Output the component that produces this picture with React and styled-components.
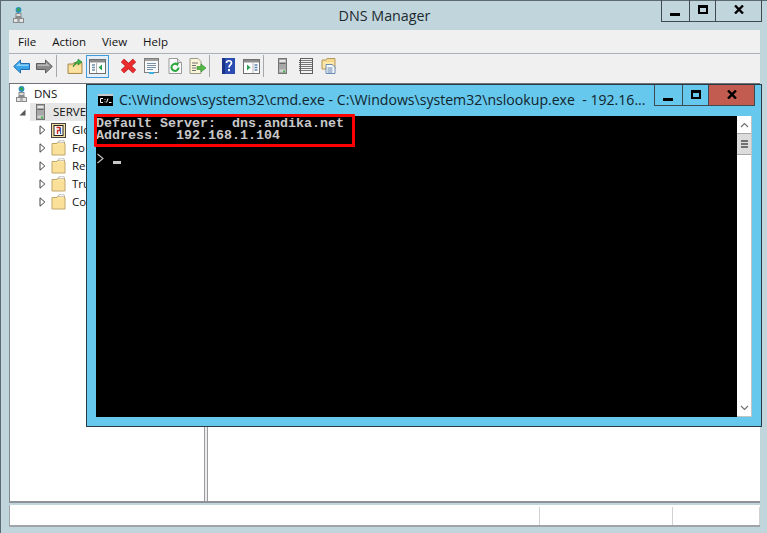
import React from 'react';
import styled, { createGlobalStyle } from 'styled-components';

const uiFont = `"Open Sans", "Noto Sans", "Liberation Sans", sans-serif`;

const GlobalStyle = createGlobalStyle`
  html, body {
    margin: 0;
    padding: 0;
    overflow: hidden;
  }
  * {
    box-sizing: border-box;
  }
`;

const Desktop = styled.div`
  position: relative;
  width: 767px;
  height: 533px;
  overflow: hidden;
  font-family: ${uiFont};
`;

const MainWindow = styled.div`
  display: flex;
  flex-direction: column;
  width: 100%;
  height: 100%;
  padding: 0 7px 6px 8px;
  background: #c1d5dc;
  border-top: 1px solid #5c6a72;
  border-left: 1px solid #5c6a72;
`;

const TitleBar = styled.div`
  position: relative;
  display: flex;
  align-items: center;
  justify-content: center;
  flex: none;
  height: 29px;
  font-size: 14.3px;
  color: #1c2a30;
`;

const AppIcon = styled.span`
  position: absolute;
  left: 4px;
  top: 6px;
  display: flex;
`;

const Controls = styled.div`
  position: absolute;
  top: ${p => p.$top}px;
  right: ${p => p.$right}px;
  display: flex;
  height: ${p => p.$height}px;
  border: 1px solid #3f4a50;
  border-top: none;
`;

const ControlButton = styled.div`
  display: flex;
  align-items: flex-start;
  justify-content: center;
  width: ${p => p.$width}px;
  padding-top: 5px;
  background: ${p => p.$bg || 'transparent'};
  & + & {
    border-left: 1px solid #3f4a50;
  }
`;

const Client = styled.div`
  display: flex;
  flex: 1;
  flex-direction: column;
  min-height: 0;
`;

const MenuBar = styled.div`
  display: flex;
  align-items: center;
  flex: none;
  gap: 16px;
  height: 24px;
  padding-left: 9px;
  background: #f0f0f0;
  border-bottom: 1px solid #a9b0b8;
  font-size: 11.5px;
  color: #111;
`;

const Toolbar = styled.div`
  display: flex;
  align-items: center;
  flex: none;
  height: 30px;
  padding: 0 0 5px 1px;
  background: #f0f0f0;
  border-bottom: 1px solid #6d7378;
`;

const ToolSlot = styled.span`
  display: flex;
  align-items: center;
  justify-content: center;
  flex: none;
  width: 23px;
  height: 23px;
  margin-right: ${p => (p.$active ? 8 : 0)}px;
  background: ${p => (p.$active ? '#e4eef8' : 'transparent')};
  border: ${p => (p.$active ? '1px solid #3e9ad8' : 'none')};
`;

const ToolSeparator = styled.span`
  flex: none;
  width: 1px;
  height: 22px;
  margin-right: ${p => p.$right}px;
  background: #a4a8ac;
`;

const Panes = styled.div`
  display: flex;
  flex: 1;
  min-height: 0;
  background: #fff;
  border-bottom: 2px solid #8e9298;
`;

const TreePane = styled.div`
  width: 195px;
  flex: none;
  padding-top: 1px;
  background: #fff;
  border-left: 1px solid #83888e;
  font-size: 11.5px;
  color: #111;
`;

const Splitter = styled.div`
  flex: none;
  width: 4px;
  background: #ececec;
  border-left: 1px solid #9a9ca0;
  border-right: 1px solid #9a9ca0;
`;

const DetailPane = styled.div`
  flex: 1;
  background: #fff;
`;

const TreeRow = styled.div`
  display: flex;
  align-items: center;
  height: 18px;
  padding-left: ${p => p.$indent}px;
  white-space: nowrap;
`;

const Expander = styled.span`
  display: flex;
  flex: none;
  justify-content: center;
  width: 9px;
  margin-right: ${p => p.$gap}px;
`;

const ServerHighlight = styled.span`
  display: flex;
  align-items: center;
  gap: 8px;
  width: 175px;
  height: 18px;
  padding-left: 6px;
  background: #e6e6e6;
`;

const RowLabel = styled.span`
  margin-left: ${p => p.$gap}px;
  padding-bottom: 2px;
`;

const StatusBar = styled.div`
  display: flex;
  flex: none;
  height: 22px;
  margin-top: 2px;
  background: #fff;
  border-left: 1px solid #a0a4a8;
  border-bottom: 2px solid #a0a4a8;
`;

const StatusCell = styled.div`
  flex: ${p => (p.$grow ? 1 : 'none')};
  width: ${p => p.$width || 'auto'};
  margin: 2px 0 0;
  border-right: 1px solid #d0d2d4;
`;

const CmdWindow = styled.div`
  position: absolute;
  left: 86px;
  top: 84px;
  display: flex;
  flex-direction: column;
  width: 676px;
  height: 343px;
  padding: 0 9px 9px 9px;
  background: #65c8ec;
  border: 1px solid #2b3a42;
`;

const CmdTitle = styled.div`
  display: flex;
  align-items: center;
  flex: none;
  gap: 6px;
  height: 31px;
  padding: 0 0 2px 2px;
  font-size: 14.1px;
  color: #13242c;
  white-space: pre;
`;

const CmdBody = styled.div`
  position: relative;
  display: flex;
  flex: 1;
  min-height: 0;
`;

const Console = styled.pre`
  flex: 1;
  margin: 0;
  padding: 2px 0 0 0;
  background: #000;
  color: #c8c8c8;
  font-family: "Liberation Mono", "DejaVu Sans Mono", monospace;
  font-size: 13.33px;
  font-weight: 700;
  line-height: 12px;
`;

const Prompt = styled.div`
  display: flex;
  align-items: flex-end;
  gap: 9px;
  margin-top: 11px;
  padding-left: 1px;
`;

const Cursor = styled.span`
  width: 8px;
  height: 3px;
  background: #c8c8c8;
`;

const Highlight = styled.div`
  position: absolute;
  left: -2px;
  top: -2px;
  width: 261px;
  height: 33px;
  border: 3px solid #f00;
  border-radius: 1px;
`;

const Scrollbar = styled.div`
  display: flex;
  flex: none;
  flex-direction: column;
  width: 15px;
  background: #fff;
  border-right: 1px solid #c4c4c4;
  border-bottom: 1px solid #c4c4c4;
`;

const ScrollArrow = styled.div`
  display: flex;
  align-items: center;
  justify-content: center;
  flex: none;
  height: 17px;
  background: #fff;
`;

const ScrollThumb = styled.div`
  display: flex;
  flex: none;
  flex-direction: column;
  align-items: center;
  justify-content: center;
  gap: 1px;
  height: 22px;
  background: #dcdcdc;
  border-top: 1px solid #a8a8a8;
  border-bottom: 1px solid #a8a8a8;
`;

const ThumbLine = styled.span`
  width: 7px;
  height: 2px;
  background: #707070;
`;

const ScrollTrack = styled.div`
  flex: 1;
`;

const Minimize = () => (
  <svg width="11" height="12" viewBox="0 0 11 12">
    <rect x="0" y="8" width="10" height="3" fill="#000" />
  </svg>
);

const Maximize = () => (
  <svg width="10" height="9" viewBox="0 0 10 9">
    <path d="M0 0h10v9H0z M2 3v4h6V3z" fill="#000" fillRule="evenodd" />
  </svg>
);

const Close = () => (
  <svg width="10" height="9" viewBox="0 0 10 9">
    <path d="M1 0.5l8 8M9 0.5l-8 8" stroke="#000" strokeWidth="2.4" fill="none" />
  </svg>
);

const DnsIcon = () => (
  <svg width="11" height="16" viewBox="0 0 11 16">
    <path d="M5.5 5v7M2.5 12v-1.5h6V12" stroke="#8a8a8a" fill="none" />
    <rect x="3" y="6.5" width="5" height="3" fill="#dcdcdc" stroke="#8a8a8a" />
    <rect x="0.5" y="11.5" width="4.5" height="4" fill="#e4e4e4" stroke="#8a8a8a" />
    <rect x="6" y="11.5" width="4.5" height="4" fill="#e4e4e4" stroke="#8a8a8a" />
    <circle cx="5.5" cy="3" r="2.9" fill="#2a8fc4" />
    <path d="M3.5 2.5l2-1.8 1.7 1.6-1 2.2-1.6-.5z" fill="#3aa84a" />
  </svg>
);

const ServerIcon = () => (
  <svg width="9" height="16" viewBox="0 0 9 16">
    <rect x="0.5" y="0.5" width="8" height="15" fill="#a8a8a8" stroke="#747474" />
    <rect x="1.5" y="2" width="6" height="2" fill="#e6e6e6" />
    <rect x="1.5" y="5" width="6" height="1" fill="#666" />
    <rect x="1.5" y="11.5" width="6" height="2.5" fill="#d2d2d2" />
    <rect x="5" y="12.5" width="2" height="2" fill="#42b84a" />
  </svg>
);

const Folder = () => (
  <svg width="15" height="16" viewBox="0 0 15 16">
    <path d="M1 3.5h5l1-1.5h6.5v2H14v11H1z" fill="#fde6a0" stroke="#bfa468" />
    <rect x="8" y="0.5" width="5" height="2" fill="#f4f4f4" stroke="#b9b9b9" strokeWidth="0.6" />
    <path d="M2 5h11v9H2z" fill="#fbe09a" />
  </svg>
);

const ZoneIcon = () => (
  <svg width="15" height="16" viewBox="0 0 15 16">
    <rect x="0.5" y="1.5" width="14" height="14" fill="#f5dd9c" stroke="#444" />
    <rect x="3" y="3.5" width="9" height="10" fill="#fff" stroke="#222" />
    <path d="M5.5 5.5h3.5v3H6.5v3.5" stroke="#c8281e" strokeWidth="1.4" fill="none" />
    <path d="M9.5 6v6" stroke="#2a62b8" strokeWidth="1.2" />
  </svg>
);

const Back = () => (
  <svg width="17" height="15" viewBox="0 0 17 15">
    <path d="M0.7 7.5L7.5 1v3.5h9v6h-9V14z" fill="#38a4ea" stroke="#1f6db0" />
    <path d="M3 7L7 3.5V5.5h8.5V7z" fill="#8fd2f8" />
  </svg>
);

const Forward = () => (
  <svg width="17" height="15" viewBox="0 0 17 15">
    <path d="M16.3 7.5L9.5 1v3.5h-9v6h9V14z" fill="#8a8a8a" stroke="#5c5c5c" />
    <path d="M14 7L10 3.5V5.5H1.5V7z" fill="#b8b8b8" />
  </svg>
);

const UpFolder = () => (
  <svg width="16" height="16" viewBox="0 0 16 16">
    <path d="M1 6h5l1-1.5h8v11H1z" fill="#f3d488" stroke="#a98c50" />
    <path d="M2 8h12v6.5H2z" fill="#fbe2a0" />
    <path d="M6 9c1-3 2-5 5-6V1l4 3-4 3V5c-2 .5-3 2-5 4z" fill="#3fb04a" stroke="#1f7c2c" strokeWidth="0.6" />
  </svg>
);

const Pane = ({ side }) => (
  <svg width="17" height="15" viewBox="0 0 17 15">
    <rect x="0.5" y="0.5" width="16" height="14" fill="#fff" stroke="#6f6f6f" />
    <rect x="1" y="1" width="15" height="2.5" fill="#8d8d8d" />
    {side === 'left' ? (
      <>
        <path d="M3 6h3M3 8.5h3M3 11h3" stroke="#6f8fa8" strokeWidth="1.3" />
        <path d="M7.5 4v10" stroke="#b4b4b4" />
        <path d="M13 5.5v6L9.5 8.5z" fill="#2aa052" />
      </>
    ) : (
      <>
        <path d="M4 5.5v6l3.5-3z" fill="#2aa052" />
        <path d="M10 4v10" stroke="#b4b4b4" />
        <path d="M11.5 6h3M11.5 8.5h3M11.5 11h3" stroke="#5c84b0" strokeWidth="1.3" />
      </>
    )}
  </svg>
);

const Delete = () => (
  <svg width="17" height="16" viewBox="0 0 17 16">
    <path d="M2.5 2.5l12 11M14.5 2.5l-12 11" stroke="#b01c20" strokeWidth="4.6" fill="none" />
    <path d="M2.5 2.5l12 11M14.5 2.5l-12 11" stroke="#ee2c2e" strokeWidth="3.4" fill="none" />
  </svg>
);

const Properties = () => (
  <svg width="15" height="16" viewBox="0 0 15 16">
    <rect x="0.5" y="0.5" width="14" height="14" fill="#f8f8f8" stroke="#7e7e7e" />
    <rect x="1" y="1" width="13" height="2" fill="#a0a0a0" />
    <path d="M3 5.5h9M3 7.5h9M3 9.5h9M3 11.5h6" stroke="#7890a8" />
    <rect x="5" y="14" width="5" height="2" fill="#3ab0e0" />
  </svg>
);

const Refresh = () => (
  <svg width="14" height="16" viewBox="0 0 14 16">
    <path d="M1 .5h8.5l4 4v11H1z" fill="#fafafa" stroke="#9a9a9a" />
    <path d="M9.5 .5v4h4" fill="#e4e4e4" stroke="#9a9a9a" />
    <path d="M10.5 9.5a3.5 3.5 0 1 1-1.5-3" fill="none" stroke="#2ca83c" strokeWidth="2" />
    <path d="M7 4.5l4 .5-1.5 3.5z" fill="#2ca83c" />
  </svg>
);

const ExportList = () => (
  <svg width="17" height="16" viewBox="0 0 17 16">
    <path d="M1 .5h8l3 3v12H1z" fill="#fbf5d8" stroke="#9a9a8a" />
    <path d="M3 5h6M3 7.5h4M3 10h4M3 12.5h4" stroke="#6e6e6e" />
    <path d="M8 8.5h4V6l5 4-5 4v-2.5H8z" fill="#55b845" stroke="#2c8a2c" strokeWidth="0.6" />
  </svg>
);

const Help = () => (
  <svg width="13" height="16" viewBox="0 0 13 16">
    <rect width="13" height="16" fill="#2a4cb0" />
    <rect x="0" y="0" width="3" height="16" fill="#1c3488" />
    <path d="M4.5 5c0-3 5-3 5 0 0 2-2.5 2-2.5 4.5" fill="none" stroke="#fff" strokeWidth="1.7" />
    <rect x="6" y="11" width="2" height="2.2" fill="#fff" />
  </svg>
);

const ListTool = () => (
  <svg width="14" height="16" viewBox="0 0 14 16">
    <rect x="1.5" y="0.5" width="12" height="15" fill="#f4f4f4" stroke="#5e5e5e" />
    <path d="M2 2.5h11M2 4.5h11M2 6.5h11M2 8.5h11M2 10.5h11M2 12.5h11" stroke="#777" />
    <path d="M0.5 2v12" stroke="#5e5e5e" strokeDasharray="1 1" />
  </svg>
);

const FolderCopy = () => (
  <svg width="15" height="16" viewBox="0 0 15 16">
    <path d="M1 2h4l1-1.5h8V11H1z" fill="#f6d98c" stroke="#b39a60" />
    <path d="M2 4h11v6H2z" fill="#fde8ac" />
    <path d="M5 6.5h6l3 2.5v6.5H5z" fill="#fafafa" stroke="#6b8bb0" />
    <path d="M6.5 10h5M6.5 12h5M6.5 14h5" stroke="#5a82b0" />
  </svg>
);

const ClosedArrow = () => (
  <svg width="7" height="10" viewBox="0 0 7 10">
    <path d="M1 .8v8.4L5.8 5z" fill="#fff" stroke="#444" />
  </svg>
);

const OpenArrow = () => (
  <svg width="7" height="7" viewBox="0 0 7 7">
    <path d="M6.5 .5V6.5H.5z" fill="#555" />
  </svg>
);

const CmdIcon = () => (
  <svg width="15" height="12" viewBox="0 0 15 12">
    <rect width="15" height="12" fill="#000" />
    <rect width="15" height="2" fill="#c8c8c8" />
    <path d="M5 4.5H2.5v4H5M7 5v.8M7 7.5v.8M8.5 8.5l1.5-4M11 8.5h2.5" stroke="#fff" fill="none" />
  </svg>
);

const ChevronUp = () => (
  <svg width="9" height="6" viewBox="0 0 9 6">
    <path d="M1 5l3.5-3.5L8 5" fill="none" stroke="#707070" strokeWidth="1.2" />
  </svg>
);

const ChevronDown = () => (
  <svg width="9" height="6" viewBox="0 0 9 6">
    <path d="M1 1l3.5 3.5L8 1" fill="none" stroke="#707070" strokeWidth="1.2" />
  </svg>
);

const PromptMark = () => (
  <svg width="7" height="11" viewBox="0 0 7 11">
    <path d="M.5 1L6 5.5.5 10" fill="none" stroke="#c8c8c8" strokeWidth="1.1" />
  </svg>
);

// only the part of each label that shows left of the cmd window
const treeItems = [
  { label: 'Glo', icon: <ZoneIcon /> },
  { label: 'Fo', icon: <Folder /> },
  { label: 'Re', icon: <Folder /> },
  { label: 'Tru', icon: <Folder /> },
  { label: 'Co', icon: <Folder /> },
];

const App = () => (
  <>
    <GlobalStyle />
    <Desktop>
      <MainWindow>
        <TitleBar>
          <AppIcon>
            <DnsIcon />
          </AppIcon>
          DNS Manager
          <Controls $top={-1} $right={-2} $height={22}>
            <ControlButton $width={27}><Minimize /></ControlButton>
            <ControlButton $width={26}><Maximize /></ControlButton>
            <ControlButton $width={46}><Close /></ControlButton>
          </Controls>
        </TitleBar>
        <Client>
          <MenuBar>
            <span>File</span>
            <span>Action</span>
            <span>View</span>
            <span>Help</span>
          </MenuBar>
          <Toolbar>
            <ToolSlot><Back /></ToolSlot>
            <ToolSlot><Forward /></ToolSlot>
            <ToolSeparator $right={6} />
            <ToolSlot><UpFolder /></ToolSlot>
            <ToolSlot $active><Pane side="left" /></ToolSlot>
            <ToolSlot><Delete /></ToolSlot>
            <ToolSlot><Properties /></ToolSlot>
            <ToolSlot><Refresh /></ToolSlot>
            <ToolSlot><ExportList /></ToolSlot>
            <ToolSeparator $right={7} />
            <ToolSlot><Help /></ToolSlot>
            <ToolSlot><Pane side="right" /></ToolSlot>
            <ToolSeparator $right={7} />
            <ToolSlot><ServerIcon /></ToolSlot>
            <ToolSlot><ListTool /></ToolSlot>
            <ToolSlot><FolderCopy /></ToolSlot>
          </Toolbar>
          <Panes>
            <TreePane>
              <TreeRow $indent={6}>
                <DnsIcon />
                <RowLabel $gap={7}>DNS</RowLabel>
              </TreeRow>
              <TreeRow $indent={8}>
                <Expander $gap={3}><OpenArrow /></Expander>
                <ServerHighlight>
                  <ServerIcon />
                  <RowLabel $gap={0}>SERVE</RowLabel>
                </ServerHighlight>
              </TreeRow>
              {treeItems.map(item => (
                <TreeRow $indent={28} key={item.label}>
                  <Expander $gap={4}><ClosedArrow /></Expander>
                  {item.icon}
                  <RowLabel $gap={6}>{item.label}</RowLabel>
                </TreeRow>
              ))}
            </TreePane>
            <Splitter />
            <DetailPane />
          </Panes>
          <StatusBar>
            <StatusCell $grow />
            <StatusCell $width="133px" />
            <StatusCell $width="87px" />
          </StatusBar>
        </Client>
      </MainWindow>

      <CmdWindow>
        <CmdTitle>
          <CmdIcon />
          {'C:\\Windows\\system32\\cmd.exe - C:\\Windows\\system32\\nslookup.exe  - 192.16...'}
        </CmdTitle>
        <Controls $top={0} $right={6} $height={21}>
          <ControlButton $width={27}><Minimize /></ControlButton>
          <ControlButton $width={26}><Maximize /></ControlButton>
          <ControlButton $width={46} $bg="#c25b50"><Close /></ControlButton>
        </Controls>
        <CmdBody>
          <Console>
            {'Default Server:  dns.andika.net\nAddress:  192.168.1.104'}
            <Prompt>
              <PromptMark />
              <Cursor />
            </Prompt>
          </Console>
          <Highlight />
          <Scrollbar>
            <ScrollArrow><ChevronUp /></ScrollArrow>
            <ScrollThumb>
              <ThumbLine />
              <ThumbLine />
              <ThumbLine />
            </ScrollThumb>
            <ScrollTrack />
            <ScrollArrow><ChevronDown /></ScrollArrow>
          </Scrollbar>
        </CmdBody>
      </CmdWindow>
    </Desktop>
  </>
);

export default App;
